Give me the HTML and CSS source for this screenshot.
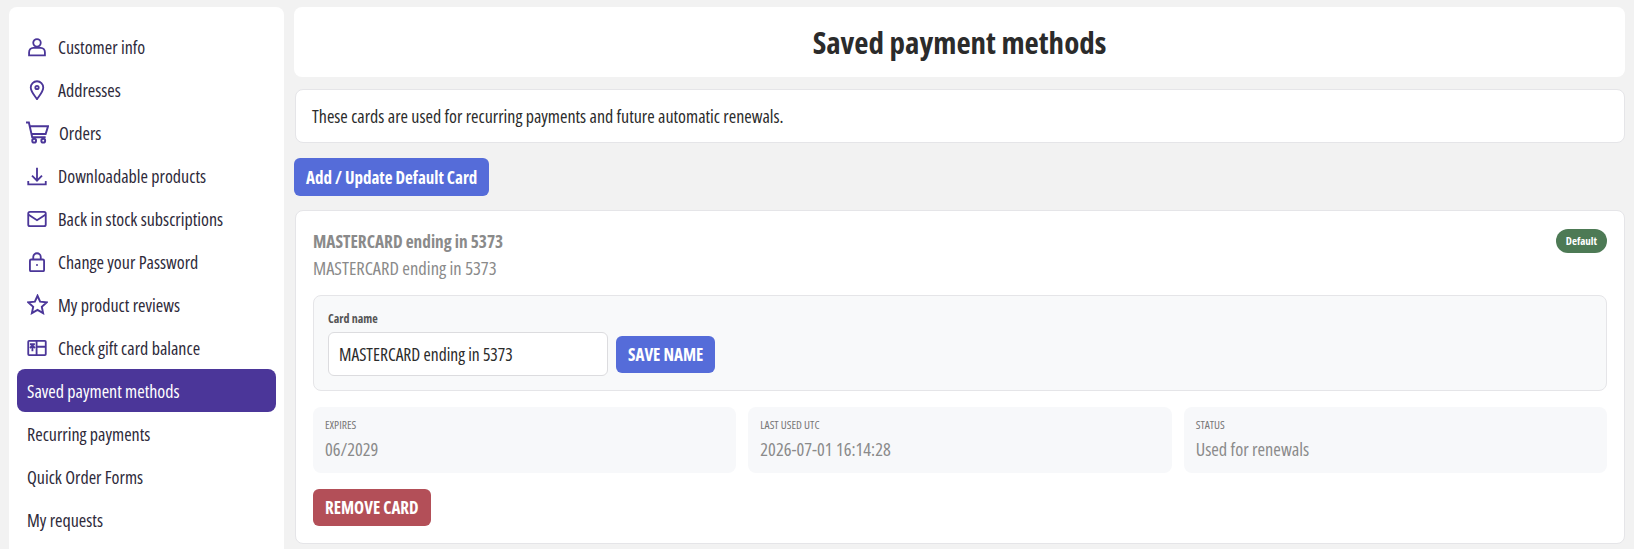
FILE: index.html
```html
<!DOCTYPE html>
<html lang="en">
<head>
    <meta charset="UTF-8">
    <title>Saved payment methods</title>
    <link rel="stylesheet" href="styles.css">
</head>
<body>
    <div class="page">
        <aside class="sidebar">
            <a class="nav-item">
                <svg class="nav-icon" viewBox="0 0 24 24"><circle cx="12" cy="7" r="4.500"/><path d="M2.500 22v-3.500c0-3 2-5.500 5-5.500h9c3 0 5 2.500 5 5.500V22z"/></svg>
                Customer info
            </a>
            <a class="nav-item">
                <svg class="nav-icon" viewBox="0 0 24 24"><path d="M12 23c-3-4.500-7.500-9-7.500-14a7.500 7.500 0 0 1 15 0c0 5-4.500 9.500-7.500 14z"/><circle cx="12" cy="9" r="2"/></svg>
                Addresses
            </a>
            <a class="nav-item">
                <svg class="nav-icon cart" viewBox="0 0 24 24"><path d="M0 1.500h3l3.500 15.500h14M4.500 5.500h18.500l-2.500 8H6"/><circle cx="8.500" cy="20.500" r="2"/><circle cx="18" cy="20.500" r="2"/></svg>
                Orders
            </a>
            <a class="nav-item">
                <svg class="nav-icon" viewBox="0 0 24 24"><path d="M12 2v15M6 11.500l6 6 6-6M1.500 18v4h21v-4"/></svg>
                Downloadable products
            </a>
            <a class="nav-item">
                <svg class="nav-icon" viewBox="0 0 24 24"><rect x="1.500" y="3.500" width="21" height="17" rx="2"/><path d="M1.500 6.500l10.500 7 10.500-7"/></svg>
                Back in stock subscriptions
            </a>
            <a class="nav-item">
                <svg class="nav-icon" viewBox="0 0 24 24"><rect x="3.500" y="9" width="17" height="14" rx="1.500"/><path d="M7.500 9V6a4.500 4.500 0 0 1 9 0v3"/><circle class="dot" cx="12" cy="15.500" r="1.200"/></svg>
                Change your Password
            </a>
            <a class="nav-item">
                <svg class="nav-icon star" viewBox="0 0 24 24"><path d="M12 2l3 6.800 7.400.800-5.500 5 1.500 7.300-6.400-3.700-6.400 3.700 1.500-7.300-5.500-5 7.400-.800z"/></svg>
                My product reviews
            </a>
            <a class="nav-item">
                <svg class="nav-icon" viewBox="0 0 24 24"><rect x="1.500" y="3.500" width="21" height="17" rx="1"/><path d="M11.500 3.500v17M11.500 10.500h11M3.500 7.500h6M6.500 7.500v8.500M3.500 12l3-3 3 3"/></svg>
                Check gift card balance
            </a>
            <a class="nav-item active">Saved payment methods</a>
            <a class="nav-item">Recurring payments</a>
            <a class="nav-item">Quick Order Forms</a>
            <a class="nav-item">My requests</a>
        </aside>

        <main class="content">
            <header class="title-bar">
                <h1>Saved payment methods</h1>
            </header>

            <div class="notice">These cards are used for recurring payments and future automatic renewals.</div>

            <button class="btn btn-add">Add / Update Default Card</button>

            <section class="card">
                <div class="card-head">
                    <div>
                        <div class="card-title">MASTERCARD ending in 5373</div>
                        <div class="card-sub">MASTERCARD ending in 5373</div>
                    </div>
                    <span class="badge">Default</span>
                </div>

                <div class="name-panel">
                    <label class="name-label">Card name</label>
                    <div class="name-row">
                        <input class="name-input" type="text" value="MASTERCARD ending in 5373">
                        <button class="btn btn-save">SAVE NAME</button>
                    </div>
                </div>

                <div class="stats">
                    <div class="stat">
                        <div class="stat-label">EXPIRES</div>
                        <div class="stat-value">06/2029</div>
                    </div>
                    <div class="stat">
                        <div class="stat-label">LAST USED UTC</div>
                        <div class="stat-value">2026-07-01 16:14:28</div>
                    </div>
                    <div class="stat">
                        <div class="stat-label">STATUS</div>
                        <div class="stat-value">Used for renewals</div>
                    </div>
                </div>

                <button class="btn btn-remove">REMOVE CARD</button>
            </section>
        </main>
    </div>
</body>
</html>
```

FILE: styles.css
```css
* {
    margin: 0;
    padding: 0;
    box-sizing: border-box;
}

body {
    background: #f2f2f2;
    color: #2b2b2b;
    font-family: "Open Sans", sans-serif;
    font-stretch: 75%;
    font-size: 18px;
    height: 549px;
    overflow: hidden;
}

.page {
    display: flex;
    gap: 10px;
    padding: 7px 9px 0;
}

.sidebar {
    width: 275px;
    height: 560px;
    flex-shrink: 0;
    background: #fff;
    border-radius: 8px;
    padding: 18px 8px 0;
}

.nav-item {
    display: flex;
    align-items: center;
    gap: 11px;
    height: 43px;
    padding: 0 10px;
    border-radius: 8px;
    color: #2e2a3a;
}

.nav-icon {
    width: 20px;
    height: 20px;
    flex-shrink: 0;
    fill: none;
    stroke: #4b3699;
    stroke-width: 2.2;
}

.nav-icon .dot {
    fill: #4b3699;
    stroke: none;
}

.nav-icon.cart {
    width: 23px;
    height: 23px;
    margin-left: -1px;
    margin-right: -1px;
    stroke-width: 2;
}

.nav-icon.star {
    width: 21px;
    height: 21px;
    margin-right: -1px;
}

.nav-item.active {
    background: #4b3699;
    color: #fff;
}

.content {
    flex: 1;
    min-width: 0;
    display: flex;
    flex-direction: column;
    align-items: flex-start;
}

.title-bar {
    width: 100%;
    height: 70px;
    background: #fff;
    border-radius: 8px;
    display: flex;
    align-items: center;
    justify-content: center;
}

h1 {
    font-size: 31px;
    font-weight: 700;
    color: #2b2b2b;
}

.notice {
    width: calc(100% - 1px);
    height: 54px;
    margin: 12px 0 0 1px;
    padding: 0 16px;
    display: flex;
    align-items: center;
    background: #fff;
    border: 1px solid #e5e5e8;
    border-radius: 8px;
}

.btn {
    border: none;
    border-radius: 6px;
    color: #fff;
    font-family: inherit;
    font-stretch: inherit;
    font-size: 17px;
    font-weight: 700;
    padding: 0 12px;
}

.btn-add {
    height: 38px;
    margin-top: 15px;
    background: #556cd9;
}

.card {
    width: calc(100% - 1px);
    height: 334px;
    margin: 14px 0 0 1px;
    padding: 18px 17px;
    background: #fff;
    border: 1px solid #e5e5e8;
    border-radius: 8px;
}

.card-head {
    display: flex;
    justify-content: space-between;
    align-items: flex-start;
    height: 66px;
    color: #8a8a8a;
}

.card-title {
    font-size: 17.300px;
    font-weight: 700;
    line-height: 25px;
}

.card-sub {
    font-size: 18.500px;
    line-height: 27px;
}

.badge {
    height: 24px;
    padding: 0 10px;
    border-radius: 13px;
    background: #4d7a55;
    color: #fff;
    font-size: 11px;
    font-weight: 700;
    line-height: 24px;
}

.name-panel {
    height: 96px;
    padding: 14px 14px;
    background: #f8f9fa;
    border: 1px solid #e5e5e8;
    border-radius: 8px;
}

.name-label {
    display: block;
    font-size: 12px;
    font-weight: 700;
    color: #555;
    margin-bottom: 5px;
}

.name-row {
    display: flex;
    align-items: center;
    gap: 8px;
}

.name-input {
    width: 280px;
    height: 44px;
    padding: 0 10px;
    background: #fff;
    border: 1px solid #dcdcdf;
    border-radius: 6px;
    color: #2b2b2b;
    font-family: inherit;
    font-stretch: inherit;
    font-size: 17.500px;
}

.btn-save {
    height: 37px;
    background: #556cd9;
}

.stats {
    display: grid;
    grid-template-columns: repeat(3, 1fr);
    gap: 12px;
    margin-top: 16px;
}

.stat {
    height: 66px;
    padding: 11px 12px;
    background: #f7f8fa;
    border-radius: 8px;
}

.stat-label {
    font-size: 11.500px;
    color: #777;
    line-height: 14px;
}

.stat-value {
    margin-top: 7px;
    font-size: 18.300px;
    color: #8a8a8a;
    line-height: 20px;
}

.btn-remove {
    height: 37px;
    margin-top: 16px;
    background: #b34f58;
}
```
